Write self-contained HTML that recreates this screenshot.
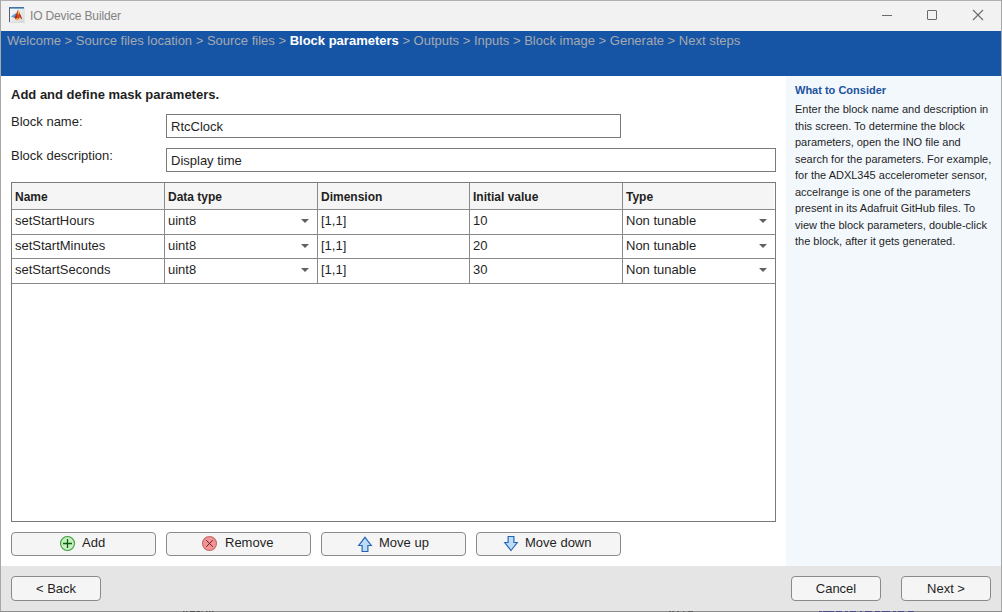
<!DOCTYPE html>
<html><head><meta charset="utf-8">
<style>
*{margin:0;padding:0;box-sizing:border-box;}
html,body{width:1002px;height:612px;overflow:hidden;background:#f2f2f2;font-family:"Liberation Sans",sans-serif;}
.abs{position:absolute;}
#win{position:absolute;left:0;top:0;width:1002px;height:612px;background:#f2f2f2;}
#topline{left:0;top:0;width:1002px;height:1px;background:#b0b0b0;}
#leftb{left:0;top:0;width:1px;height:612px;background:#a8a8a8;}
#rightb{left:1001px;top:0;width:1px;height:612px;background:#a8a8a8;}
#botb{left:0;top:611px;width:1002px;height:1px;background:#8c8c8c;}
#title{left:30px;top:9px;font-size:12px;letter-spacing:-0.15px;color:#838383;white-space:nowrap;}
#blue{left:1px;top:31px;width:1000px;height:45px;background:#1655a6;}
#crumb{left:7px;top:33px;font-size:13px;color:#a4a9b0;white-space:nowrap;}
#crumb b{color:#fff;}
#main{left:1px;top:76px;width:785px;height:490px;background:#fff;}
#side{left:786px;top:76px;width:215px;height:490px;background:#f3f8fd;}
#foot{left:1px;top:566px;width:1000px;height:45px;background:#e5e5e5;}
.t{position:absolute;white-space:nowrap;font-size:13px;color:#1f1f1f;}
.inp{position:absolute;border:1px solid #7a7a7a;background:#fff;}
.btn{position:absolute;border:1px solid #8a8a8a;border-radius:4px;background:#f5f5f5;height:25px;font-size:13px;color:#1f1f1f;text-align:center;line-height:23px;white-space:nowrap;}
#tbl{left:11px;top:182px;width:765px;height:340px;border:1px solid #7a7a7a;background:#fff;}
.hdr{position:absolute;left:0;top:0;width:762px;height:26px;background:#f5f5f5;}
.hl{position:absolute;left:0;width:763px;height:1px;background:#8a8a8a;}
.vl{position:absolute;top:0;width:1px;height:100px;background:#8a8a8a;}
.th{position:absolute;font-size:12px;font-weight:bold;color:#1f1f1f;white-space:nowrap;}
.td{position:absolute;font-size:13px;color:#1f1f1f;white-space:nowrap;}
.arr{position:absolute;width:0;height:0;border-left:4px solid transparent;border-right:4px solid transparent;border-top:4px solid #606060;}
</style></head><body>
<div id="win">
<div class="abs" id="topline"></div>
<div class="abs" id="title">IO Device Builder</div>
<div class="abs" id="blue"></div>
<div class="abs" id="crumb">Welcome &gt; Source files location &gt; Source files &gt; <b>Block parameters</b> &gt; Outputs &gt; Inputs &gt; Block image &gt; Generate &gt; Next steps</div>
<div class="abs" id="main"></div>
<div class="abs" id="side"></div>
<div class="abs" id="foot"></div>

<!-- window icon -->
<svg class="abs" style="left:9px;top:7px" width="16" height="16" viewBox="0 0 16 16">
<defs><linearGradient id="ig" x1="0" y1="0" x2="1" y2="1"><stop offset="0" stop-color="#ffffff"/><stop offset="1" stop-color="#d4d6d8"/></linearGradient>
<linearGradient id="tb" x1="0" y1="0" x2="0" y2="1"><stop offset="0" stop-color="#2e5a86"/><stop offset="1" stop-color="#8ec0e6"/></linearGradient></defs>
<rect x="0" y="0" width="15" height="16" fill="url(#ig)"/>
<rect x="0" y="0" width="15" height="2" fill="url(#tb)"/>
<rect x="0" y="1" width="1" height="14" fill="#56606a"/>
<rect x="15" y="1" width="1" height="15" fill="#e2e4e6"/>
<rect x="1" y="15" width="15" height="1" fill="#d8dadc"/>
<path d="M2 9.6 L5 7.6 L7.8 5.4 L8.4 7 L7.5 9.6 L6 10.8 L4 10.6 Z" fill="#4f9fdc"/>
<path d="M5.6 10.6 L7.6 6.6 L8.3 4 L9.8 3.6 L10.8 6.5 L11.2 9 L10.5 11 L9 12.6 L7.2 13 L6.2 12 Z" fill="#d4461a"/>
<path d="M5.4 10.5 L7.6 7.2 L8.2 9.5 L7.2 11.5 Z" fill="#a8281a"/>
<path d="M9 4 L9.9 3.8 L10.3 6 L9.6 8.2 L9.1 6.2 Z" fill="#f8cc30"/>
<path d="M6.6 11.6 L8.8 11 L9.2 12.8 L7.4 13.3 Z" fill="#f5b020"/>
<path d="M10.6 6.2 L11.4 7.4 L12.2 9.6 L13 11.6 L12.2 12.2 L11.2 10.4 L10.7 8.6 Z" fill="#b8261a"/>
<path d="M8.2 3.6 L9.2 3.5 L8.8 4.6 Z" fill="#3a78c0"/>
</svg>
<!-- window controls -->
<div class="abs" style="left:882px;top:15px;width:10px;height:1px;background:#6a6a6a"></div>
<div class="abs" style="left:927px;top:10px;width:10px;height:10px;border:1px solid #6a6a6a;border-radius:1px"></div>
<svg class="abs" style="left:972px;top:9px" width="12" height="12" viewBox="0 0 12 12"><path d="M1 1L11 11M11 1L1 11" stroke="#6a6a6a" stroke-width="1.1"/></svg>

<div class="t" style="left:11px;top:87px;font-weight:bold;">Add and define mask parameters.</div>
<div class="t" style="left:11px;top:114px;">Block name:</div>
<div class="t" style="left:11px;top:148px;">Block description:</div>
<div class="inp" style="left:166px;top:114px;width:455px;height:24px;"></div>
<div class="t" style="left:171px;top:119px;">RtcClock</div>
<div class="inp" style="left:166px;top:148px;width:610px;height:24px;"></div>
<div class="t" style="left:171px;top:153px;">Display time</div>

<div class="abs" id="tbl">
  <div class="hdr"></div>
  <div class="hl" style="top:26px"></div>
  <div class="hl" style="top:51px"></div>
  <div class="hl" style="top:75px"></div>
  <div class="hl" style="top:100px"></div>
  <div class="vl" style="left:152px"></div>
  <div class="vl" style="left:305px"></div>
  <div class="vl" style="left:457px"></div>
  <div class="vl" style="left:610px"></div>
  <div class="th" style="left:3px;top:7px">Name</div>
  <div class="th" style="left:156px;top:7px">Data type</div>
  <div class="th" style="left:309px;top:7px">Dimension</div>
  <div class="th" style="left:461px;top:7px">Initial value</div>
  <div class="th" style="left:614px;top:7px">Type</div>

  <div class="td" style="left:3px;top:30px">setStartHours</div>
  <div class="td" style="left:156px;top:30px">uint8</div>
  <div class="arr" style="left:289px;top:36px"></div>
  <div class="td" style="left:309px;top:30px">[1,1]</div>
  <div class="td" style="left:461px;top:30px">10</div>
  <div class="td" style="left:614px;top:30px">Non tunable</div>
  <div class="arr" style="left:747px;top:36px"></div>

  <div class="td" style="left:3px;top:55px">setStartMinutes</div>
  <div class="td" style="left:156px;top:55px">uint8</div>
  <div class="arr" style="left:289px;top:61px"></div>
  <div class="td" style="left:309px;top:55px">[1,1]</div>
  <div class="td" style="left:461px;top:55px">20</div>
  <div class="td" style="left:614px;top:55px">Non tunable</div>
  <div class="arr" style="left:747px;top:61px"></div>

  <div class="td" style="left:3px;top:79px">setStartSeconds</div>
  <div class="td" style="left:156px;top:79px">uint8</div>
  <div class="arr" style="left:289px;top:85px"></div>
  <div class="td" style="left:309px;top:79px">[1,1]</div>
  <div class="td" style="left:461px;top:79px">30</div>
  <div class="td" style="left:614px;top:79px">Non tunable</div>
  <div class="arr" style="left:747px;top:85px"></div>
</div>

<div class="btn" style="left:11px;top:532px;width:145px;height:24px;"></div>
<div class="btn" style="left:166px;top:532px;width:145px;height:24px;"></div>
<div class="btn" style="left:321px;top:532px;width:145px;height:24px;"></div>
<div class="btn" style="left:476px;top:532px;width:145px;height:24px;"></div>
<svg class="abs" style="left:59px;top:535px" width="17" height="17" viewBox="0 0 17 17"><circle cx="8.5" cy="8.5" r="7" fill="#c6f0c0" stroke="#3b9b3b" stroke-width="1.1"/><path d="M4 8.5H13M8.5 4V13" stroke="#0d5d12" stroke-width="1.3"/></svg>
<div class="t" style="left:82px;top:535px;">Add</div>
<svg class="abs" style="left:201px;top:535px" width="17" height="17" viewBox="0 0 17 17"><circle cx="8.5" cy="8.5" r="7" fill="#f29494" stroke="#c46a6a" stroke-width="1.1"/><path d="M5.2 5.2L11.8 11.8M11.8 5.2L5.2 11.8" stroke="#5a1818" stroke-width="0.9"/></svg>
<div class="t" style="left:225px;top:535px;">Remove</div>
<svg class="abs" style="left:357px;top:536px" width="16" height="17" viewBox="0 0 16 17"><path d="M8 1.3L14.3 9.5H10.9V15.5H5.1V9.5H1.7Z" fill="#bcdcfa" stroke="#2263b4" stroke-width="1.15" stroke-linejoin="miter"/></svg>
<div class="t" style="left:379px;top:535px;">Move up</div>
<svg class="abs" style="left:503px;top:535px" width="16" height="17" viewBox="0 0 16 17"><path d="M8 15.5L14.3 7.5H10.9V1.5H5.1V7.5H1.7Z" fill="#bcdcfa" stroke="#2263b4" stroke-width="1.15" stroke-linejoin="miter"/></svg>
<div class="t" style="left:525px;top:535px;">Move down</div>

<div class="t" style="left:795px;top:84px;font-size:11px;font-weight:bold;color:#1b52a0;">What to Consider</div>
<div class="abs" style="left:795px;top:101px;width:200px;font-size:11px;line-height:16.5px;color:#1f1f1f;">Enter the block name and description in<br>this screen. To determine the block<br>parameters, open the INO file and<br>search for the parameters. For example,<br>for the ADXL345 accelerometer sensor,<br>accelrange is one of the parameters<br>present in its Adafruit GitHub files. To<br>view the block parameters, double-click<br>the block, after it gets generated.</div>

<div class="btn" style="left:11px;top:576px;width:90px;">&lt; Back</div>
<div class="btn" style="left:791px;top:576px;width:90px;">Cancel</div>
<div class="btn" style="left:901px;top:576px;width:90px;">Next &gt;</div>
<div class="abs" id="leftb"></div>
<div class="abs" id="rightb"></div>
<div class="abs" id="botb"></div>
<svg class="abs" style="left:0;top:611px" width="1002" height="1" viewBox="0 0 1002 1">
<path d="M183 0.5h1.5M186 0.5h1.5M190 0.5h5M196.5 0.5h3.5M201.5 0.5h1M206 0.5h1.5M209 0.5h1.5M212 0.5h1.5" stroke="#505050" stroke-width="1"/>
<path d="M669 0.5h2M672 0.5h2M677 0.5h2M683 0.5h1.5M688 0.5h5" stroke="#5a5a5a" stroke-width="1"/>
<path d="M819 0.5h3M823 0.5h11M836 0.5h6M845 0.5h3M850 0.5h6M860 0.5h2M865 0.5h7M875 0.5h5M882 0.5h8M893 0.5h3M898 0.5h6M908 0.5h6" stroke="#4a4a88" stroke-width="1"/>
</svg>
</div>
</body></html>
